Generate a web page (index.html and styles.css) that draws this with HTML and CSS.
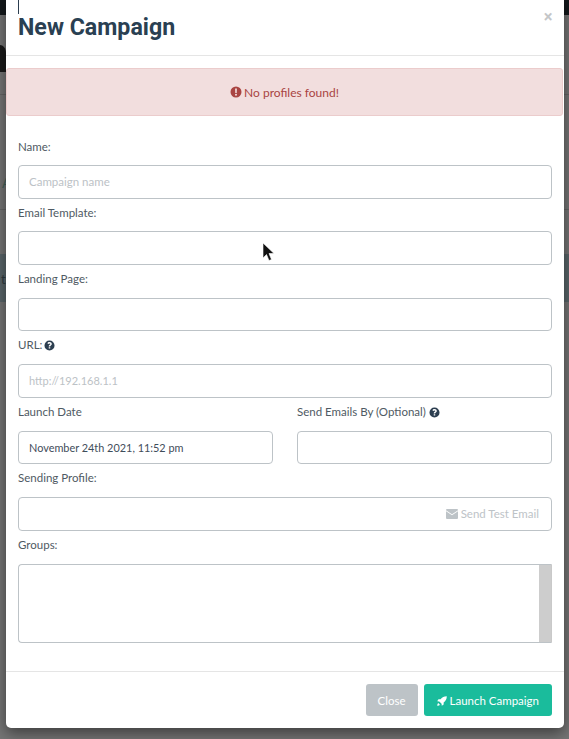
FILE: index.html
```html
<!DOCTYPE html>
<html lang="en">
<head>
<meta charset="utf-8">
<title>New Campaign</title>
<link rel="stylesheet" href="styles.css">
</head>
<body>
<div class="backdrop-top"></div>
<svg class="backdrop-blob" viewBox="0 0 6 27"><path fill="#1b1b1b" d="M0 0c3 0 6 3 6 8v19H0z"/></svg>
<div class="backdrop-line line-a"></div>
<div class="backdrop-line line-b"></div>
<div class="backdrop-band"></div>
<span class="peek peek-a">A</span>
<span class="peek peek-b">t</span>
<main class="modal">
  <header class="modal-header">
    <span class="caret"></span>
    <h2 class="title">New Campaign</h2>
    <span class="close-x">×</span>
  </header>
  <div class="modal-body">
    <div class="alert">
      <svg class="icon alert-icon" viewBox="0 0 24 24"><path fill="currentColor" fill-rule="evenodd" d="M12 1a11 11 0 1 0 0 22a11 11 0 0 0 0-22zM10.200 5h3.600l-.4 9h-2.800zM12 15.600a2 2 0 1 1 0 4a2 2 0 0 1 0-4z"/></svg>
      <span>No profiles found!</span>
    </div>
    <form class="form">
      <label class="label label-first">Name:</label>
      <div class="field ph">Campaign name</div>
      <label class="label">Email Template:</label>
      <div class="field"></div>
      <label class="label">Landing Page:</label>
      <div class="field"></div>
      <label class="label label-icon label-url">URL:<svg class="icon help" viewBox="0 0 24 24"><path fill="currentColor" fill-rule="evenodd" d="M12 1a11 11 0 1 0 0 22a11 11 0 0 0 0-22zM12 4.600c3 0 5 1.800 5 4.200c0 2-1.200 2.800-2.400 3.600c-.8.500-1.100.9-1.100 1.800h-3.200c0-2 .7-3 2-3.800c1-.6 1.500-1 1.500-1.700c0-.8-.7-1.300-1.700-1.300c-1.100 0-1.800.6-2.400 1.500L7.300 7.300C8.300 5.600 9.800 4.600 12 4.600zM10.300 15.600h3.300v3h-3.300z"/></svg></label>
      <div class="field ph url">http://192.168.1.1</div>
      <div class="two-col">
        <div>
          <label class="label">Launch Date</label>
          <div class="field date">November 24th 2021, 11:52 pm</div>
        </div>
        <div>
          <label class="label label-icon">Send Emails By (Optional)<svg class="icon help" viewBox="0 0 24 24"><path fill="currentColor" fill-rule="evenodd" d="M12 1a11 11 0 1 0 0 22a11 11 0 0 0 0-22zM12 4.600c3 0 5 1.800 5 4.200c0 2-1.200 2.800-2.400 3.600c-.8.500-1.100.9-1.100 1.800h-3.200c0-2 .7-3 2-3.800c1-.6 1.500-1 1.500-1.700c0-.8-.7-1.300-1.700-1.300c-1.100 0-1.800.6-2.400 1.500L7.300 7.300C8.300 5.600 9.800 4.600 12 4.600zM10.300 15.600h3.300v3h-3.300z"/></svg></label>
          <div class="field"></div>
        </div>
      </div>
      <label class="label">Sending Profile:</label>
      <div class="field test">
        <svg class="icon mail" viewBox="0 0 24 20"><path fill="currentColor" d="M0 4.500V18a2 2 0 0 0 2 2h20a2 2 0 0 0 2-2V4.500l-12 8zM2 0a2 2 0 0 0-2 2v.4l12 8l12-8V2a2 2 0 0 0-2-2z"/></svg>
        <span>Send Test Email</span>
      </div>
      <label class="label label-last">Groups:</label>
      <div class="groups"><span class="scrollbar"></span></div>
    </form>
  </div>
  <footer class="modal-footer">
    <button class="btn btn-close" type="button">Close</button>
    <button class="btn btn-launch" type="button"><svg class="icon rocket" viewBox="0 0 24 24"><path fill="currentColor" d="M23.500.5C17 .5 12 3 8.500 8H3.500L.5 12.500l5 .5l5.500 5.500l.5 5l4.500-3v-5C21 12 23.500 7 23.500.5zM3 17c-1.500 1-2 3.500-2.500 6.500C3.500 23 6 22.500 7 21z"/></svg> Launch Campaign</button>
  </footer>
</main>
<svg class="pointer" viewBox="0 0 14 20"><path fill="#111" stroke="#fff" stroke-width=".6" d="M1 1v15l3.500-3.500l2.500 6l2.500-1l-2.500-6h5z"/></svg>
</body>
</html>
```
FILE: styles.css
```css
* { box-sizing: border-box; }
html, body { margin: 0; height: 739px; overflow: hidden; }
body {
  position: relative;
  background: #767676;
  font-family: Lato, "Noto Sans", sans-serif;
  font-size: 11.5px;
  color: #4f5a63;
}
.backdrop-top { position: absolute; left: 0; right: 0; top: 0; height: 15px; background: #14191c; }
.backdrop-blob { position: absolute; left: 0; top: 45px; width: 6px; height: 27px; }
.backdrop-line { position: absolute; left: 0; right: 0; height: 1px; background: #666; }
.line-a { top: 94px; }
.line-b { top: 209px; }
.backdrop-band { position: absolute; left: 0; right: 0; top: 254px; height: 48px; background: #5b676b; }
.peek { position: absolute; font-size: 13px; line-height: 14px; }
.peek-a { left: 2px; top: 176px; color: #44635a; }
.peek-b { left: 1px; top: 272px; color: #2f3b40; }
.modal {
  position: absolute;
  left: 6px;
  top: -6px;
  width: 558px;
  height: 734px;
  background: #fff;
  border-radius: 0 0 5px 5px;
  box-shadow: 0 5px 15px rgba(0,0,0,.5);
  display: flex;
  flex-direction: column;
}
.modal-header {
  position: relative;
  height: 62px;
  flex: none;
  padding: 0 12px;
  border-bottom: 1px solid #e5e5e5;
}
.caret { position: absolute; left: 12px; top: 6px; width: 1px; height: 14px; background: #2c3e50; }
.title {
  margin: 0;
  padding-top: 18px;
  font-family: Roboto, sans-serif;
  font-size: 23.2px;
  line-height: 30px;
  font-weight: 700;
  color: #2a4052;
}
.close-x { position: absolute; right: 11px; top: 13px; font-family: "Noto Sans", sans-serif; font-size: 17px; font-weight: 700; color: #c4c6c8; line-height: 20px; }
.modal-body { flex: 1; padding: 12px 0 0; }
.alert {
  height: 48px;
  margin-right: 1px;
  background: #f2dede;
  border: 1px solid #ebcccc;
  border-radius: 3px;
  color: #a94442;
  font-size: 12px;
  display: flex;
  align-items: center;
  justify-content: center;
  gap: 2px;
}
.icon { width: 11px; height: 11px; display: inline-block; vertical-align: -1px; }
.alert-icon { width: 12px; height: 12px; }
.form { padding: 23px 12px 0; display: block; }
.label { display: block; height: 16px; line-height: 16px; margin: 6px 0 10.8px; color: #4f5a63; }
.label-first { margin-top: 0; margin-bottom: 10px; }
.label-last { margin-bottom: 11.2px; }
.label-icon .help { margin-left: 3px; vertical-align: -2px; }
.label-url .help { margin-left: 1.5px; }
.help { color: #2c3e50; }
.field {
  height: 33.6px;
  border: 1px solid #bdc3c7;
  border-radius: 4px;
  padding: 0 10px;
  line-height: 32px;
  color: #2c3e50;
  background: #fff;
}
.ph { color: #bcc2c6; }
.url { font-size: 11px; }
.date { color: #3f4d5a; font-size: 10.9px; }
.two-col { display: grid; grid-template-columns: 255px 255px; column-gap: 24px; }
.test { display: flex; align-items: center; justify-content: flex-end; gap: 3px; color: #bdc3c7; padding-right: 12px; }
.mail { width: 12px; height: 10px; }
.groups {
  height: 79px;
  border: 1px solid #bdc3c7;
  border-right-color: #c9c9c9;
  border-radius: 4px 0 0 4px;
  display: flex;
  justify-content: flex-end;
}
.scrollbar { width: 12px; background: #cdcdcd; }
.modal-footer {
  flex: none;
  height: 57px;
  border-top: 1px solid #e5e5e5;
  padding: 12px 12px 0;
  display: flex;
  justify-content: flex-end;
  align-items: flex-start;
  gap: 6px;
}
.btn {
  height: 32px;
  border: 0;
  border-radius: 3px;
  font-family: inherit;
  font-size: 11.5px;
  color: #fff;
  padding: 0 12px;
}
.btn-close { background: #bdc3c7; }
.btn-launch { background: #1abc9c; padding: 0 13px; }
.rocket { width: 10px; height: 10px; }
.pointer { position: absolute; left: 262px; top: 242px; width: 14px; height: 20px; }
```
